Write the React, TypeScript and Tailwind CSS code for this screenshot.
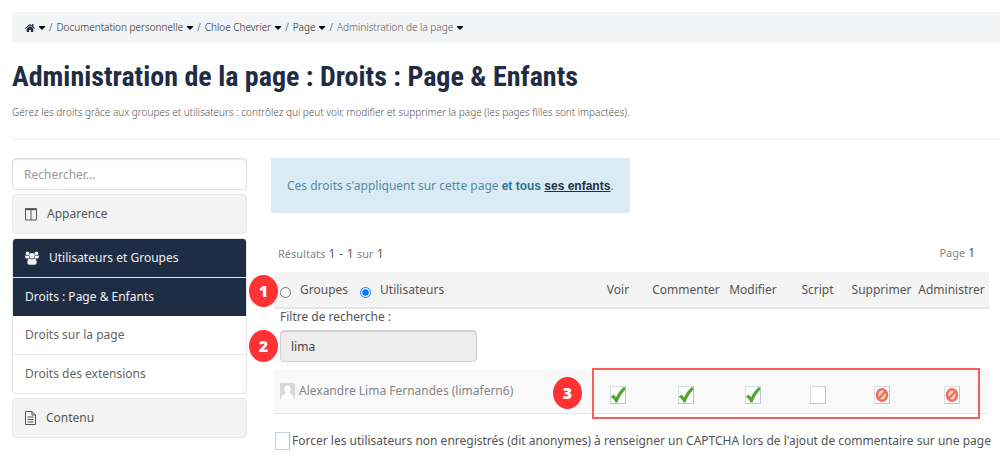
import { Fragment } from "react";
import { FaHome } from "react-icons/fa";

const crumbs = ["Documentation personnelle", "Chloe Chevrier", "Page"];
const columns = ["Voir", "Commenter", "Modifier", "Script", "Supprimer", "Administrer"];
type State = "allowed" | "none" | "denied";
const rights: State[] = ["allowed", "allowed", "allowed", "none", "denied", "denied"];

function Caret() {
  return (
    <svg viewBox="0 0 6 4" className="h-1 w-[6px] shrink-0" aria-hidden="true">
      <path d="M0 0h6v1L3 4 0 1z" fill="#050a12" />
    </svg>
  );
}

function ColumnsIcon() {
  return (
    <svg viewBox="0 0 12 13" className="h-[13px] w-3 shrink-0" fill="none" stroke="currentColor" aria-hidden="true">
      <rect x="0.5" y="1" width="11" height="11" rx="0.5" />
      <path d="M0 1.2h12" strokeWidth="2" />
      <path d="M6 1v11" />
    </svg>
  );
}

function UsersIcon() {
  return (
    <svg viewBox="0 0 14 14" className="h-[14px] w-[14px] shrink-0" fill="currentColor" aria-hidden="true">
      <circle cx="2.6" cy="2.3" r="1.9" />
      <circle cx="11.4" cy="2.3" r="1.9" />
      <path d="M0 5.2C0 4.5.5 4.2 1 4.4c1 .5 2 .5 3 0 0 1-.2 2 .6 3H1.6C.7 7.400 0 7 0 5.200zM14 5.200c0-.7-.5-1-1-.8-1 .5-2 .5-3 0 0 1 .2 2-.6 3h3c.9 0 1.600-.4 1.600-2.200z" />
      <circle cx="7" cy="4.700" r="2.800" />
      <path d="M4.500 7.600c1.600 1.100 3.400 1.100 5 0 1.500.2 2.200 2 2.200 4 0 1.500-.8 2.200-2 2.200H4.300c-1.200 0-2-.7-2-2.200 0-2 .7-3.800 2.200-4z" />
    </svg>
  );
}

function FileIcon() {
  return (
    <svg viewBox="0 0 11 14" className="h-[14px] w-[11px] shrink-0" fill="none" stroke="currentColor" aria-hidden="true">
      <path d="M.5.500h6.500l3.500 3.500v9.500H.5z" />
      <path d="M7 .5V4h3.500M2.500 6h6M2.500 8.500h6M2.500 11h6" />
    </svg>
  );
}

function RightIcon({ state }: { state: State }) {
  return (
    <svg viewBox="0 0 16 18" className="h-[18px] w-4" aria-hidden="true">
      <path d="M.5.500h15v17H.5z" fill="#fff" stroke="#d3dce8" />
      <path d="M15.500 0v17.500H0" fill="none" stroke="#b9c9dc" />
      {state === "allowed" && (
        <path d="M.8 10.800 3.600 8.600 6 11.200C8.200 7 11 3.200 14.200.8L15.600 3.600C12 7 9.400 11.500 7.400 16.500H5.400C4.400 14 3 12.300.8 10.800z" fill="#55a532" />
      )}
      {state === "denied" && (
        <>
          <ellipse cx="8" cy="9" rx="5" ry="5.800" fill="#f6d5cd" stroke="#f0705a" strokeWidth="2.600" />
          <path d="M4.800 12.800 11.400 5.200" stroke="#f0705a" strokeWidth="2.400" />
        </>
      )}
    </svg>
  );
}

const badge =
  "absolute flex h-8 w-[29px] items-center justify-center rounded-[50%] bg-[#ff3333] font-['Open_Sans',sans-serif] text-base font-extrabold text-white";

export default function App() {
  return (
    <div className="bg-white pt-3 pl-3 font-['Noto_Sans',sans-serif] text-xs text-[#666]">
      <nav aria-label="Fil d'Ariane" className="flex h-[31px] items-center gap-1 rounded-l bg-[#f3f4f6] pl-[13px] text-[10px] font-light text-[#222]">
        <a href="#accueil" aria-label="Accueil" className="text-[#1f2d44]">
          <FaHome className="h-[10px] w-[10px]" />
        </a>
        <Caret />
        {crumbs.map((c) => (
          <Fragment key={c}>
            <span>/</span>
            <a href="#page">{c}</a>
            <Caret />
          </Fragment>
        ))}
        <span>/</span>
        <span className="text-[#555]">Administration de la page</span>
        <Caret />
      </nav>

      <header className="border-b-2 border-[#f6f6f6] pb-[18px]">
        <h1 className="pt-[14px] font-['Roboto_Condensed','Liberation_Sans_Narrow',sans-serif] text-[28px] leading-10 font-bold text-[#1f2d44]">
          Administration de la page : Droits : Page &amp; Enfants
        </h1>
        <p className="pt-[7px] text-[10px] leading-4 font-light text-[#555]">
          Gérez les droits grâce aux groupes et utilisateurs : contrôlez qui peut voir, modifier et supprimer la page (les pages filles sont impactées).
        </p>
      </header>

      <div className="flex gap-6 pt-[18px]">
        <aside className="flex w-[235px] shrink-0 flex-col gap-1">
          <input
            type="search"
            aria-label="Rechercher"
            placeholder="Rechercher..."
            className="h-8 w-full rounded border border-[#ddd] px-[11px] text-xs shadow-[inset_0_1px_1px_#e8e8e8] placeholder:text-[#999]"
          />
          <a href="#apparence" className="flex h-10 items-center gap-[10px] rounded border border-[#eaeaea] bg-[#f4f4f4] px-3 text-[#555]">
            <ColumnsIcon />
            Apparence
          </a>
          <div className="overflow-hidden rounded border border-[#e5e5e5]">
            <a href="#utilisateurs" className="flex h-[38px] items-center gap-[10px] bg-[#1f2d44] px-3 text-[#f1f1f1]">
              <UsersIcon />
              Utilisateurs et Groupes
            </a>
            <a href="#droits" aria-current="page" className="flex h-[39px] items-center border-t border-[#e5e5e5] bg-[#1f2d44] px-3 text-[#f1f1f1]">
              Droits : Page &amp; Enfants
            </a>
            <a href="#droits-page" className="flex h-[38px] items-center px-3">Droits sur la page</a>
            <a href="#extensions" className="flex h-[39px] items-center border-t border-[#e5e5e5] px-3">Droits des extensions</a>
          </div>
          <a href="#contenu" className="flex h-10 items-center gap-[10px] rounded border border-[#eaeaea] bg-[#f4f4f4] px-3 text-[#555]">
            <FileIcon />
            Contenu
          </a>
        </aside>

        <main className="min-w-0 flex-1 pr-[11px]">
          <p className="flex h-[55px] w-fit items-center bg-[#d9ecf6] px-4 text-[#55879f]">
            <span>
              Ces droits s'appliquent sur cette page{" "}
              <strong className="font-['Liberation_Sans',sans-serif] text-[#31708f]">
                et tous <a href="#enfants" className="text-[#1f2d44] underline">ses enfants</a>
              </strong>
              .
            </span>
          </p>
          <div className="flex justify-between pt-[30px] pr-[14px] pl-[7px] text-[11px] leading-5 text-[#858585]">
            <span>Résultats <span className="text-[13px] text-[#666]">1 - 1</span> sur <span className="text-[13px] text-[#666]">1</span></span>
            <span>Page <span className="text-xs text-[#555]">1</span></span>
          </div>

          <div className="relative ml-[3px] pt-2">
            <table className="w-full table-fixed border-collapse">
              <colgroup>
                <col />
                <col className="w-[68px]" />
                <col className="w-[68px]" />
                <col className="w-[66px]" />
                <col className="w-[63px]" />
                <col className="w-[65px]" />
                <col className="w-[75px]" />
              </colgroup>
              <thead>
                <tr className="h-9 border-b-2 border-[#e6e6e6] bg-[#f4f4f4]">
                  <th className="text-left font-normal text-[#555]">
                    <div className="flex items-center pl-[6px]">
                      <input id="groupes" type="radio" name="cible" className="mt-[6px] h-[11px] w-[11px]" />
                      <label htmlFor="groupes" className="pl-[9px]">Groupes</label>
                      <input id="utilisateurs" type="radio" name="cible" defaultChecked className="mt-[6px] ml-3 h-[11px] w-[11px] accent-[#0a75ff]" />
                      <label htmlFor="utilisateurs" className="pl-[9px]">Utilisateurs</label>
                    </div>
                  </th>
                  {columns.map((c) => (
                    <th key={c} className="font-normal whitespace-nowrap text-[#555]">{c}</th>
                  ))}
                </tr>
              </thead>
              <tbody>
                <tr className="h-[61px]">
                  <td colSpan={7} className="pl-[6px] align-top">
                    <label htmlFor="filtre" className="block pb-[5px] leading-4 text-[#555]">Filtre de recherche :</label>
                    <input
                      id="filtre"
                      type="text"
                      defaultValue="lima"
                      className="block h-8 w-[197px] rounded border border-[#d2d2d2] bg-[#ededed] px-[10px] text-[#444] shadow-[inset_0_1px_1px_#ccc]"
                    />
                  </td>
                </tr>
                <tr className="h-11 border-b border-[#e8e8e8] bg-[#f9f9f9]">
                  <td>
                    <div className="flex items-center gap-1 pl-[6px] text-[#858585]">
                      <svg viewBox="0 0 15 16" className="h-4 w-[15px] shrink-0" aria-hidden="true">
                        <path d="M0 0h15v16H0z" fill="#d8d8d8" />
                        <path d="M7.500 2.500c2 0 3.200 1.500 3.200 3.700 0 1.500-.6 2.700-1.300 3.500.3 1.800 3.600 1.500 4.100 4.300v2h-12v-2c.5-2.800 3.800-2.500 4.100-4.300-.7-.8-1.300-2-1.300-3.500 0-2.200 1.200-3.700 3.200-3.700z" fill="#fff" />
                      </svg>
                      Alexandre Lima Fernandes (limafern6)
                    </div>
                  </td>
                  {rights.map((state, i) => (
                    <td key={columns[i]}>
                      <button type="button" aria-label={columns[i]} className="mx-auto mt-2 block">
                        <RightIcon state={state} />
                      </button>
                    </td>
                  ))}
                </tr>
              </tbody>
            </table>
            <span className={badge + " top-[11px] -left-[25px]"}>1</span>
            <span className={badge + " top-[66px] -left-[25px]"}>2</span>
            <span className={badge + " top-[113px] right-[407px]"}>3</span>
            <div className="pointer-events-none absolute top-[104px] right-[9px] h-[51px] w-[388px] border-2 border-[#fa5b5b]" />
          </div>

          <label className="flex items-center gap-[2px] pt-[18px] pl-1 whitespace-nowrap text-[#555]">
            <input type="checkbox" className="h-[18px] w-[15px] shrink-0 appearance-none border border-[#c3d2e4] border-r-[#a9bdd3] bg-white" />
            Forcer les utilisateurs non enregistrés (dit anonymes) à renseigner un CAPTCHA lors de l'ajout de commentaire sur une page
          </label>
        </main>
      </div>
    </div>
  );
}
